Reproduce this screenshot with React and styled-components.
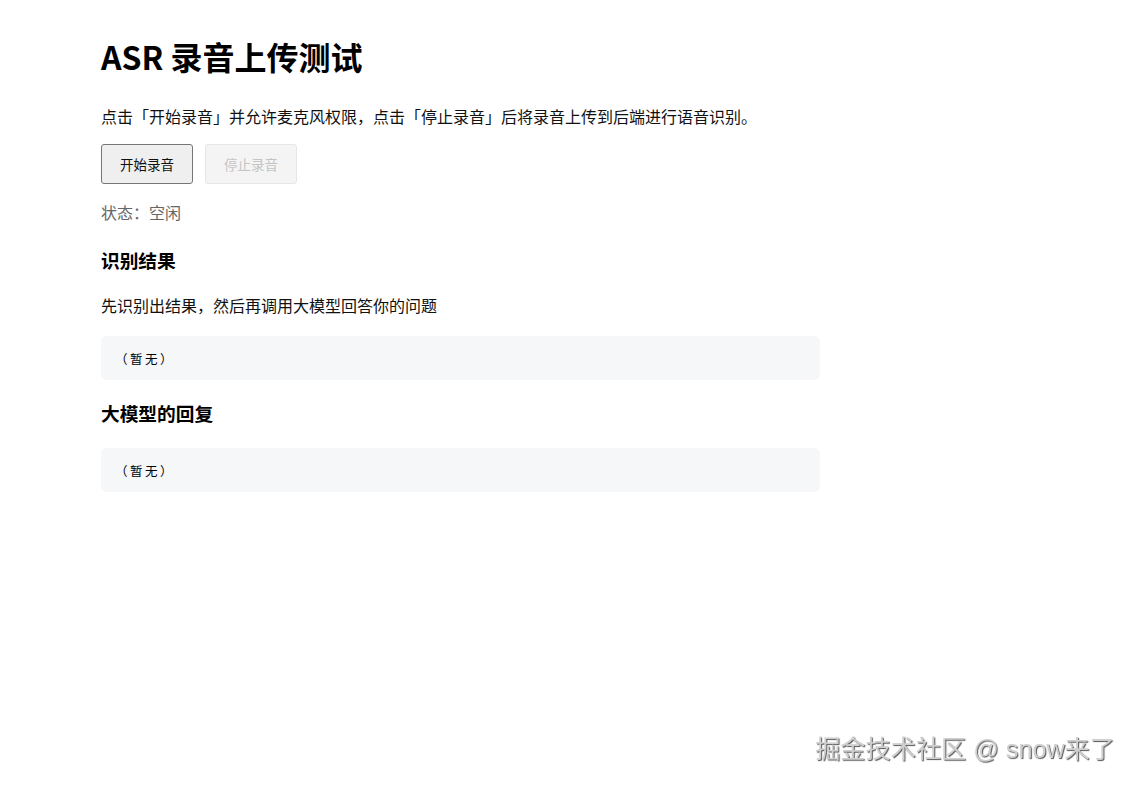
import React from "react";
import styled, { createGlobalStyle } from "styled-components";

const Global = createGlobalStyle`
  html, body { margin: 0; padding: 0; background: #fff; }
  body {
    font-family: "Noto Sans CJK SC", "Noto Sans", sans-serif;
    color: #111;
  }
`;

const Page = styled.main`
  display: flex;
  flex-direction: column;
  align-items: flex-start;
  width: 720px;
  padding: 36px 0 0 101px;
`;

const Title = styled.h1`
  margin: 0;
  font-size: 32px;
  line-height: 40px;
  font-weight: 700;
  color: #000;
`;

const Lead = styled.p`
  margin: 28px 0 0;
  font-size: 16px;
  line-height: 24px;
  white-space: nowrap;
`;

const Toolbar = styled.div`
  display: flex;
  gap: 12px;
  margin-top: 16px;
`;

const Button = styled.button`
  width: 92px;
  height: 40px;
  padding: 0;
  border-radius: 3px;
  font-family: inherit;
  font-size: 13.5px;
  border: 1px solid ${(p) => (p.disabled ? "#e6e6e6" : "#767676")};
  background: ${(p) => (p.disabled ? "#f4f4f4" : "#efefef")};
  color: ${(p) => (p.disabled ? "#c4c4c4" : "#111")};
`;

const Status = styled.div`
  margin-top: 16px;
  font-size: 16px;
  line-height: 24px;
  color: #666;
`;

const Heading = styled.h3`
  margin: ${(p) => p.$top}px 0 0;
  font-size: 18.7px;
  line-height: 28px;
  font-weight: 700;
  color: #000;
`;

const Note = styled.p`
  margin: 19px 0 0;
  font-size: 16px;
  line-height: 24px;
`;

const Output = styled.pre`
  box-sizing: border-box;
  width: 719px;
  height: 44px;
  margin: ${(p) => p.$top}px 0 0;
  padding: 0 14px;
  display: flex;
  align-items: center;
  background: #f6f7f9;
  border-radius: 6px;
  font-family: "Liberation Mono", "Noto Sans CJK SC", monospace;
  font-size: 12.5px;
  letter-spacing: 2.5px;
  color: #000;
`;

const Watermark = styled.div`
  position: fixed;
  right: 24px;
  top: 733px;
  font-family: "Liberation Sans", "Noto Sans CJK SC", sans-serif;
  font-size: 25.2px;
  line-height: 32px;
  color: #cfcfcf;
  text-shadow: 1px 1px 1px #555;
`;

export default function App() {
  return (
    <>
      <Global />
      <Page>
        <Title>ASR 录音上传测试</Title>
        <Lead>点击「开始录音」并允许麦克风权限，点击「停止录音」后将录音上传到后端进行语音识别。</Lead>
        <Toolbar>
          <Button>开始录音</Button>
          <Button disabled>停止录音</Button>
        </Toolbar>
        <Status>状态：空闲</Status>
        <Heading $top={22}>识别结果</Heading>
        <Note>先识别出结果，然后再调用大模型回答你的问题</Note>
        <Output $top={19}>（暂无）</Output>
        <Heading $top={19}>大模型的回复</Heading>
        <Output $top={21}>（暂无）</Output>
      </Page>
      <Watermark>掘金技术社区 @ snow来了</Watermark>
    </>
  );
}
